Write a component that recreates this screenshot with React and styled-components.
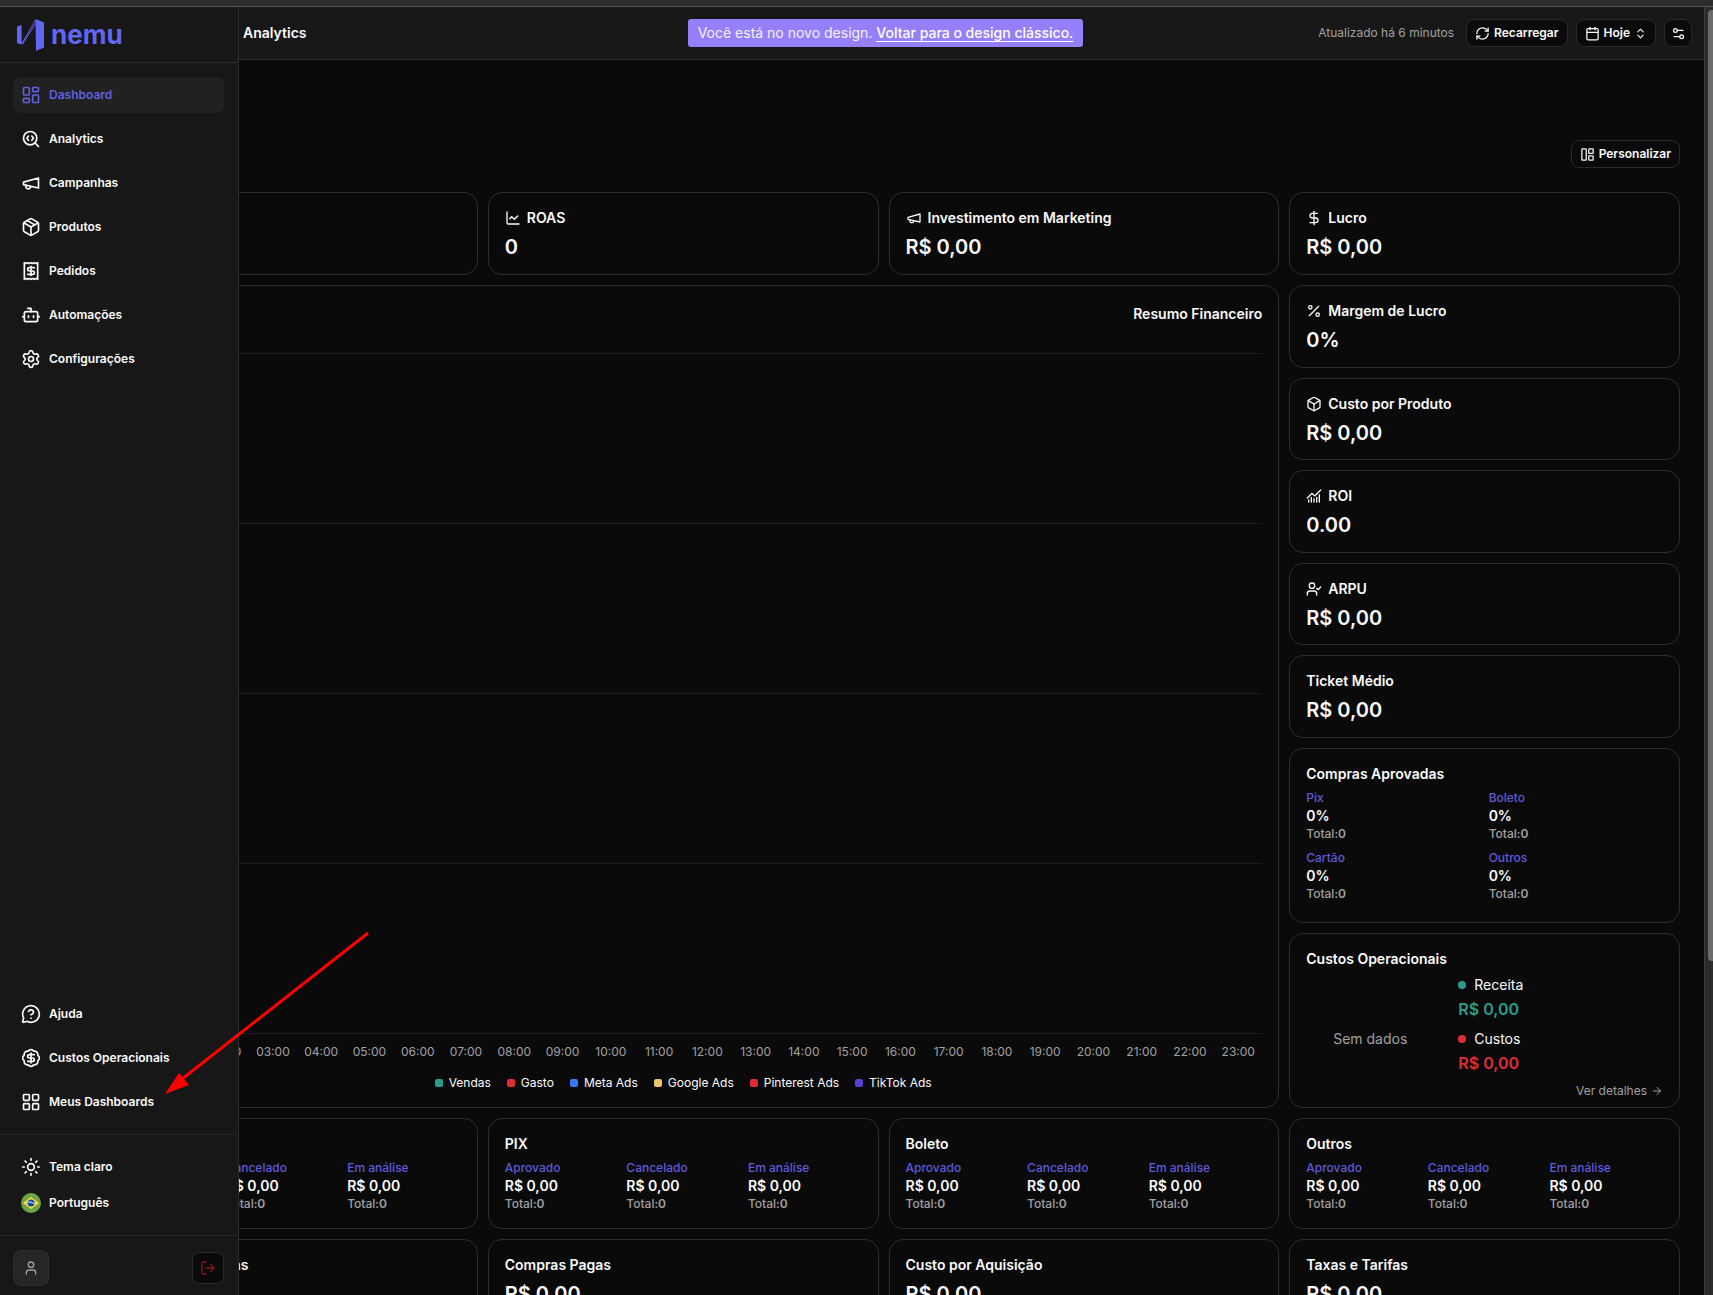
import React from 'react';
import styled, { createGlobalStyle } from 'styled-components';
import {
  ArrowRight,
  BadgeDollarSign,
  Bot,
  Box,
  Calendar,
  ChartLine,
  ChartNoAxesCombined,
  ChevronsUpDown,
  DollarSign,
  LayoutDashboard,
  LayoutGrid,
  LayoutPanelLeft,
  LogOut,
  MessageCircleQuestion,
  Package,
  Percent,
  Receipt,
  RefreshCw,
  SearchCode,
  Settings,
  Settings2,
  Sun,
  User,
  UserCheck,
} from 'lucide-react';

const GlobalStyle = createGlobalStyle`
  * {
    box-sizing: border-box;
  }

  body {
    margin: 0;
    background: #0a0a0a;
    color: #fafafa;
    font-family: Inter, 'Liberation Sans', sans-serif;
    font-size: 14px;
    line-height: 20px;
  }

  button {
    font-family: inherit;
    cursor: pointer;
  }
`;

const Page = styled.div`
  display: flex;
  flex-direction: column;
  height: 100vh;
  overflow: hidden;
`;

const WindowEdge = styled.div`
  flex: none;
  height: 7px;
  background: #2d2d2d;
  border-bottom: 1px solid #555555;
`;

const Body = styled.div`
  position: relative;
  display: flex;
  flex: 1;
  min-height: 0;
`;

const Sidebar = styled.aside`
  position: absolute;
  top: 0;
  bottom: 0;
  left: 0;
  z-index: 10;
  display: flex;
  flex-direction: column;
  width: 239px;
  background: #171717;
  border-right: 1px solid #2e2e2e;
`;

const Brand = styled.a`
  display: flex;
  align-items: center;
  gap: 6px;
  height: 56px;
  padding: 0 17px;
  border-bottom: 1px solid #2e2e2e;
  color: #6366f1;
  font-size: 26px;
  font-weight: 700;
  line-height: 32px;
  text-decoration: none;
`;

const Nav = styled.nav`
  display: flex;
  flex-direction: column;
  gap: 8px;
  padding: 14px 14px 14px 13px;
`;

const MainNav = styled(Nav)`
  flex: 1;
`;

const Preferences = styled.div`
  padding: 14px 14px 14px 13px;
  border-top: 1px solid #262626;
`;

const NavItem = styled.a`
  display: flex;
  align-items: center;
  gap: 8px;
  width: 100%;
  height: 36px;
  padding: 0 8px;
  border: none;
  border-radius: 8px;
  background: ${({ $active }) => ($active ? '#212121' : 'transparent')};
  color: ${({ $active }) => ($active ? '#625fe0' : '#fafafa')};
  font-size: 12px;
  font-weight: 600;
  line-height: 16px;
  text-decoration: none;
`;

const Account = styled.div`
  display: flex;
  align-items: center;
  justify-content: space-between;
  padding: 14px 14px 9px 13px;
  border-top: 1px solid #262626;
`;

const IconButton = styled.button`
  display: flex;
  align-items: center;
  justify-content: center;
  width: 28px;
  height: 28px;
  padding: 0;
  border: 1px solid #2a2a2a;
  border-radius: 8px;
  background: #0a0a0a;
  color: #fafafa;
`;

const Avatar = styled(IconButton)`
  width: 36px;
  height: 36px;
  border-color: #2e2e2e;
  background: #262626;
  color: #a1a1a1;
`;

const LogOutButton = styled(IconButton)`
  width: 32px;
  height: 32px;
  color: #82181a;
`;

const Main = styled.main`
  flex: 1;
  min-width: 0;
  margin-left: 67px;
`;

const Header = styled.header`
  display: grid;
  grid-template-columns: 1fr auto 1fr;
  align-items: center;
  height: 53px;
  background: #171717;
  border-bottom: 1px solid #2e2e2e;
`;

const Crumb = styled.h1`
  margin: 0;
  padding-left: 176px;
  font-size: 14px;
  font-weight: 600;
  line-height: 20px;
`;

const Banner = styled.p`
  margin: 0;
  padding: 4px 10px;
  border-radius: 3px;
  background: #957ffb;
  color: #f5f3ff;

  a {
    color: #ffffff;
    font-weight: 500;
    text-underline-offset: 3px;
  }
`;

const Actions = styled.div`
  display: flex;
  align-items: center;
  justify-content: flex-end;
  gap: 8px;
  padding-right: 12px;
`;

const Updated = styled.span`
  margin-right: 4px;
  color: #a1a1a1;
  font-size: 12px;
`;

const Button = styled.button`
  display: flex;
  align-items: center;
  gap: 4px;
  height: 28px;
  padding: 0 8px;
  border: 1px solid #2a2a2a;
  border-radius: 8px;
  background: #0a0a0a;
  color: #fafafa;
  font-size: 12px;
  font-weight: 600;
  line-height: 16px;
`;

const Content = styled.div`
  display: flex;
  flex-direction: column;
  gap: 10px;
  padding: 80px 24px 0 20px;
`;

const Toolbar = styled.div`
  display: flex;
  justify-content: flex-end;
  padding-bottom: 14px;
`;

const Grid = styled.div`
  display: grid;
  grid-template-columns: repeat(4, minmax(0, 1fr));
  grid-auto-rows: minmax(83px, auto);
  gap: 10px;
`;

const ChartGrid = styled(Grid)`
  grid-template-rows: repeat(9, 1fr);
`;

const Card = styled.section`
  display: flex;
  flex-direction: column;
  grid-row: span ${({ $span }) => $span || 1};
  min-width: 0;
  padding: 15px 16px ${({ $padBottom }) => $padBottom || 8}px;
  border: 1px solid #2e2e2e;
  border-radius: 14px;
`;

const CardTitle = styled.h2`
  display: flex;
  align-items: center;
  gap: 6px;
  margin: 0;
  font-size: 14px;
  font-weight: 600;
  line-height: 20px;
`;

const Value = styled.p`
  margin: 4px 0 0;
  font-size: 20px;
  font-weight: 600;
  line-height: 30px;
`;

const Stats = styled.dl`
  display: grid;
  grid-template-columns: repeat(${({ $columns }) => $columns}, 1fr);
  gap: 8px;
  margin: 6px 0 0;
`;

const Stat = styled.div`
  font-size: 12px;
  font-weight: 500;
  line-height: 16px;

  dt,
  dd {
    margin: 0;
  }

  dt {
    color: #5f5bdc;
  }
`;

const StatValue = styled.dd`
  font-size: 14px;
  font-weight: 600;
  line-height: 20px;
`;

const StatTotal = styled.dd`
  color: #a1a1a1;

  b {
    font-weight: 600;
  }
`;

const ChartCard = styled(Card)`
  grid-column: span 3;
  padding: 18px 16px 14px;
`;

const ChartTitle = styled(CardTitle)`
  justify-content: flex-end;
`;

const Plot = styled.div`
  display: flex;
  flex-direction: column;
  justify-content: space-between;
  height: 681px;
  margin-top: 29px;
`;

const GridLine = styled.div`
  height: 1px;
  background: #1b1b1b;
`;

const Axis = styled.div`
  display: flex;
  margin-top: 8px;
  color: #a1a1a1;
  font-size: 12px;
  line-height: 20px;

  span {
    flex: 1;
    text-align: center;
  }
`;

const Legend = styled.ul`
  display: flex;
  justify-content: center;
  gap: 16px;
  margin: 11px 0 0;
  padding: 0;
  font-size: 12px;
  line-height: 20px;
  list-style: none;
`;

const LegendItem = styled.li`
  display: flex;
  align-items: center;
  gap: 6px;

  &::before {
    width: 8px;
    height: 8px;
    border-radius: 2px;
    background: ${({ $color }) => $color};
    content: '';
  }
`;

const Costs = styled.div`
  display: grid;
  grid-template-columns: 128px 1fr;
  align-items: center;
  gap: 24px;
  margin-top: 4px;
`;

const Empty = styled.span`
  padding-top: 30px;
  color: #a1a1a1;
  text-align: center;
`;

const CostList = styled.div`
  display: flex;
  flex-direction: column;
  gap: 6px;
`;

const CostLabel = styled.div`
  display: flex;
  align-items: center;
  gap: 8px;
  line-height: 24px;

  &::before {
    width: 8px;
    height: 8px;
    border-radius: 50%;
    background: ${({ $color }) => $color};
    content: '';
  }
`;

const CostValue = styled.div`
  color: ${({ $color }) => $color};
  font-size: 16px;
  font-weight: 600;
  line-height: 24px;
`;

const Details = styled.a`
  display: flex;
  align-items: center;
  align-self: flex-end;
  gap: 4px;
  margin-top: auto;
  color: #a1a1a1;
  font-size: 12px;
  line-height: 16px;
  text-decoration: none;
`;

const ScrollTrack = styled.div`
  flex: none;
  width: 9px;
  padding: 3px 0 0 3px;
  border-left: 1px solid #3d3d3d;
  background: #2b2b2b;
`;

const ScrollThumb = styled.div`
  height: 74%;
  border-radius: 4px 0 0 4px;
  background: #6b6b6b;
`;

const Arrow = styled.svg`
  position: absolute;
  top: 920px;
  left: 160px;
  z-index: 20;
  pointer-events: none;
`;

const Logo = () => (
  <svg width="28" height="32" viewBox="0 0 28 32" fill="currentColor" aria-hidden="true">
    <path d="M0 7.500 4.600 6V24.500L5.500 25 3 25.300 0 24Z" />
    <path d="M4.500 25.200 18.500 1" stroke="currentColor" strokeWidth="1" />
    <path d="M5.500 25.200 19 4" stroke="currentColor" strokeWidth="1" />
    <path d="M18.500 0 27 3.500V28.500L19 32Z" />
  </svg>
);

const Megaphone = ({ size }) => (
  <svg
    width={size}
    height={size}
    viewBox="0 0 24 24"
    fill="none"
    stroke="currentColor"
    strokeWidth="2"
    strokeLinecap="round"
    strokeLinejoin="round"
    aria-hidden="true"
  >
    <path d="m3 11 18-5v12L3 14v-3z" />
    <path d="M11.600 16.800a3 3 0 1 1-5.800-1.600" />
  </svg>
);

const BrazilFlag = () => (
  <svg width="20" height="20" viewBox="0 0 20 20" aria-hidden="true">
    <circle cx="10" cy="10" r="10" fill="#6da544" />
    <path d="M10 4 18 10 10 16 2 10Z" fill="#ffda44" />
    <circle cx="10" cy="10" r="3.500" fill="#0052b4" />
    <path d="M6.800 9.200C9 8.600 11.500 9.300 13.200 11" fill="none" stroke="#f0f0f0" strokeWidth="1" />
  </svg>
);

const mainLinks = [
  { label: 'Dashboard', icon: LayoutDashboard, active: true },
  { label: 'Analytics', icon: SearchCode },
  { label: 'Campanhas', icon: Megaphone },
  { label: 'Produtos', icon: Package },
  { label: 'Pedidos', icon: Receipt },
  { label: 'Automações', icon: Bot },
  { label: 'Configurações', icon: Settings },
];

const helpLinks = [
  { label: 'Ajuda', icon: MessageCircleQuestion },
  { label: 'Custos Operacionais', icon: BadgeDollarSign },
  { label: 'Meus Dashboards', icon: LayoutGrid },
];

const topCards = [
  { title: 'Receita', icon: DollarSign, value: 'R$ 0,00' },
  { title: 'ROAS', icon: ChartLine, value: '0' },
  { title: 'Investimento em Marketing', icon: Megaphone, value: 'R$ 0,00' },
  { title: 'Lucro', icon: DollarSign, value: 'R$ 0,00' },
];

const sideCards = [
  { title: 'Margem de Lucro', icon: Percent, value: '0%' },
  { title: 'Custo por Produto', icon: Box, value: 'R$ 0,00' },
  { title: 'ROI', icon: ChartNoAxesCombined, value: '0.00' },
  { title: 'ARPU', icon: UserCheck, value: 'R$ 0,00' },
  { title: 'Ticket Médio', value: 'R$ 0,00' },
];

const bottomCards = [
  { title: 'Compras Canceladas', value: '0' },
  { title: 'Compras Pagas', value: 'R$ 0,00' },
  { title: 'Custo por Aquisição', value: 'R$ 0,00' },
  { title: 'Taxas e Tarifas', value: 'R$ 0,00' },
];

const costs = [
  { label: 'Receita', color: '#2a9d8f' },
  { label: 'Custos', color: '#e02d35' },
];

const legend = [
  { label: 'Vendas', color: '#2a9d8f' },
  { label: 'Gasto', color: '#e02d35' },
  { label: 'Meta Ads', color: '#3b76f6' },
  { label: 'Google Ads', color: '#e9c46a' },
  { label: 'Pinterest Ads', color: '#e02d35' },
  { label: 'TikTok Ads', color: '#5b3fd0' },
];

const hours = Array.from({ length: 24 }, (_, hour) => `${String(hour).padStart(2, '0')}:00`);

const MetricCard = ({ title, icon: Icon, value }) => (
  <Card>
    <CardTitle>
      {Icon && <Icon size={16} />}
      {title}
    </CardTitle>
    <Value>{value}</Value>
  </Card>
);

const StatList = ({ labels, value, columns }) => (
  <Stats $columns={columns}>
    {labels.map((label) => (
      <Stat key={label}>
        <dt>{label}</dt>
        <StatValue>{value}</StatValue>
        <StatTotal>
          Total:<b>0</b>
        </StatTotal>
      </Stat>
    ))}
  </Stats>
);

const Links = ({ items }) =>
  items.map(({ label, icon: Icon, active }) => (
    <NavItem key={label} href="#" $active={active}>
      <Icon size={20} />
      {label}
    </NavItem>
  ));

function App() {
  return (
    <Page>
      <GlobalStyle />
      <WindowEdge />
      <Body>
        <Sidebar>
          <Brand href="#">
            <Logo />
            nemu
          </Brand>
          <MainNav>
            <Links items={mainLinks} />
          </MainNav>
          <Nav>
            <Links items={helpLinks} />
          </Nav>
          <Preferences>
            <NavItem as="button" type="button">
              <Sun size={20} />
              Tema claro
            </NavItem>
            <NavItem as="button" type="button">
              <BrazilFlag />
              Português
            </NavItem>
          </Preferences>
          <Account>
            <Avatar type="button" aria-label="Conta">
              <User size={16} />
            </Avatar>
            <LogOutButton type="button" aria-label="Sair">
              <LogOut size={16} />
            </LogOutButton>
          </Account>
        </Sidebar>

        <Main>
          <Header>
            <Crumb>Analytics</Crumb>
            <Banner>
              Você está no novo design. <a href="#">Voltar para o design clássico.</a>
            </Banner>
            <Actions>
              <Updated>Atualizado há 6 minutos</Updated>
              <Button type="button">
                <RefreshCw size={15} />
                Recarregar
              </Button>
              <Button type="button">
                <Calendar size={15} />
                Hoje
                <ChevronsUpDown size={13} />
              </Button>
              <IconButton type="button" aria-label="Filtros">
                <Settings2 size={15} />
              </IconButton>
            </Actions>
          </Header>

          <Content>
            <Toolbar>
              <Button type="button">
                <LayoutPanelLeft size={15} />
                Personalizar
              </Button>
            </Toolbar>

            <Grid>
              {topCards.map((card) => (
                <MetricCard key={card.title} {...card} />
              ))}
            </Grid>

            <ChartGrid>
              <ChartCard $span={9}>
                <ChartTitle>Resumo Financeiro</ChartTitle>
                <Plot>
                  {[4, 3, 2, 1, 0].map((line) => (
                    <GridLine key={line} />
                  ))}
                </Plot>
                <Axis>
                  {hours.map((hour) => (
                    <span key={hour}>{hour}</span>
                  ))}
                </Axis>
                <Legend>
                  {legend.map(({ label, color }) => (
                    <LegendItem key={label} $color={color}>
                      {label}
                    </LegendItem>
                  ))}
                </Legend>
              </ChartCard>
              {sideCards.map((card) => (
                <MetricCard key={card.title} {...card} />
              ))}
              <Card $span={2}>
                <CardTitle>Compras Aprovadas</CardTitle>
                <StatList labels={['Pix', 'Boleto', 'Cartão', 'Outros']} value="0%" columns={2} />
              </Card>
              <Card $span={2}>
                <CardTitle>Custos Operacionais</CardTitle>
                <Costs>
                  <Empty>Sem dados</Empty>
                  <CostList>
                    {costs.map(({ label, color }) => (
                      <div key={label}>
                        <CostLabel $color={color}>{label}</CostLabel>
                        <CostValue $color={color}>R$ 0,00</CostValue>
                      </div>
                    ))}
                  </CostList>
                </Costs>
                <Details href="#">
                  Ver detalhes
                  <ArrowRight size={12} />
                </Details>
              </Card>
            </ChartGrid>

            <Grid>
              {['Cartão', 'PIX', 'Boleto', 'Outros'].map((title) => (
                <Card key={title} $padBottom={16}>
                  <CardTitle>{title}</CardTitle>
                  <StatList labels={['Aprovado', 'Cancelado', 'Em análise']} value="R$ 0,00" columns={3} />
                </Card>
              ))}
            </Grid>

            <Grid>
              {bottomCards.map((card) => (
                <MetricCard key={card.title} {...card} />
              ))}
            </Grid>
          </Content>
        </Main>

        <ScrollTrack>
          <ScrollThumb />
        </ScrollTrack>

        <Arrow width="216" height="180" viewBox="0 0 216 180" aria-hidden="true">
          <path d="M208 6 22 152" stroke="#ff0000" strokeWidth="3" />
          <path d="M5 167 19 146 29 158Z" fill="#ff0000" />
        </Arrow>
      </Body>
    </Page>
  );
}

export default App;
